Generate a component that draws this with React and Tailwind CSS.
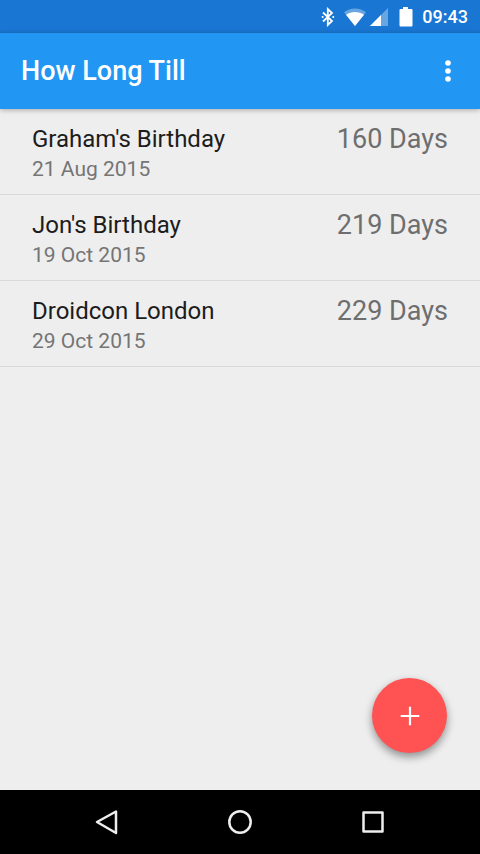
const events = [
  { name: "Graham's Birthday", date: "21 Aug 2015", days: 160 },
  { name: "Jon's Birthday", date: "19 Oct 2015", days: 219 },
  { name: "Droidcon London", date: "29 Oct 2015", days: 229 },
];

function StatusBar() {
  return (
    <div className="flex h-[33px] items-center justify-end bg-[#1976d2] pr-3 text-white">
      <svg className="mr-[7px] h-5 w-4" viewBox="0 0 16 20" fill="none" stroke="currentColor" strokeWidth="1.8" aria-hidden="true">
        <path d="M3 5.5l9 8.5-4.2 4V2L12 6 3 14.5" />
        <path d="M2.6 10h.1M13.2 10h.1" strokeWidth="2" strokeLinecap="round" />
      </svg>
      <svg className="mr-0.5 h-5 w-6" viewBox="0 0 24 20" fill="currentColor" aria-hidden="true">
        <path d="M12 19L1 5.2C4 2.9 8 1.5 12 1.5s8 1.4 11 3.7z" opacity="0.35" />
        <path d="M12 19L3 7.8C5.6 6 8.7 5 12 5s6.4 1 9 2.8z" />
      </svg>
      <svg className="mr-[9px] h-5 w-5" viewBox="0 0 20 20" fill="currentColor" aria-hidden="true">
        <path d="M19 1v18H1z" opacity="0.35" />
        <path d="M12 8v11H1z" />
      </svg>
      <svg className="mr-2 h-5 w-4" viewBox="0 0 16 20" fill="currentColor" aria-hidden="true">
        <path d="M5 0h5v2h3.5q1 0 1 1v15.5q0 1-1 1h-11q-1 0-1-1V3q0-1 1-1H5z" />
      </svg>
      <span className="text-lg font-medium">09:43</span>
    </div>
  );
}

function AppBar() {
  return (
    <header className="z-10 flex h-[76px] items-center justify-between bg-[#2196f3] pr-4 pl-[21px] text-white shadow-[0_1px_5px_rgba(0,0,0,0.3)]">
      <h1 className="text-[27px] leading-8 font-medium">How Long Till</h1>
      <button type="button" aria-label="More options" className="flex size-8 items-center justify-center">
        <svg className="h-6 w-2" viewBox="0 0 8 24" fill="currentColor" aria-hidden="true">
          <circle cx="4" cy="4" r="2.8" />
          <circle cx="4" cy="12" r="2.8" />
          <circle cx="4" cy="20" r="2.8" />
        </svg>
      </button>
    </header>
  );
}

function EventRow({ event }) {
  return (
    <li className="flex items-start justify-between border-b border-[#d9d9d9] px-8 pt-[15px] pb-[10px]">
      <div>
        <h2 className="text-2xl leading-[30px] text-[#1c1c1c]">{event.name}</h2>
        <p className="text-[21px] leading-[30px] text-[#757575]">{event.date}</p>
      </div>
      <span className="text-[27px] leading-[30px] text-[#6e6e6e]">{event.days} Days</span>
    </li>
  );
}

function NavBar() {
  return (
    <nav className="flex h-16 items-center justify-center gap-[93px] bg-black text-[#eeeeee]">
      <button type="button" aria-label="Back" className="size-10">
        <svg viewBox="0 0 40 40" fill="none" stroke="currentColor" strokeWidth="2.5" strokeLinejoin="round">
          <path d="M29 9.500v21.500L10 20z" />
        </svg>
      </button>
      <button type="button" aria-label="Home" className="size-10">
        <svg viewBox="0 0 40 40" fill="none" stroke="currentColor" strokeWidth="2.5">
          <circle cx="20" cy="20" r="10.7" />
        </svg>
      </button>
      <button type="button" aria-label="Recent apps" className="size-10">
        <svg viewBox="0 0 40 40" fill="none" stroke="currentColor" strokeWidth="2.5" strokeLinejoin="round">
          <rect x="10.5" y="10.5" width="19" height="19" />
        </svg>
      </button>
    </nav>
  );
}

export default function App() {
  return (
    <div className="flex min-h-screen flex-col bg-[#eeeeee] font-[Roboto,sans-serif]">
      <StatusBar />
      <AppBar />
      <main className="relative flex-1">
        <ul>
          {events.map((event) => (
            <EventRow key={event.name} event={event} />
          ))}
        </ul>
        <button
          type="button"
          aria-label="Add event"
          className="absolute right-[33px] bottom-[37px] flex size-[75px] items-center justify-center rounded-full bg-[#ff5252] text-white shadow-[0_4px_8px_rgba(0,0,0,0.4)]"
        >
          <svg className="size-5" viewBox="0 0 20 20" fill="none" stroke="currentColor" strokeWidth="2.2" aria-hidden="true">
            <path d="M10 .7v18.6M.7 10h18.6" />
          </svg>
        </button>
      </main>
      <NavBar />
    </div>
  );
}
